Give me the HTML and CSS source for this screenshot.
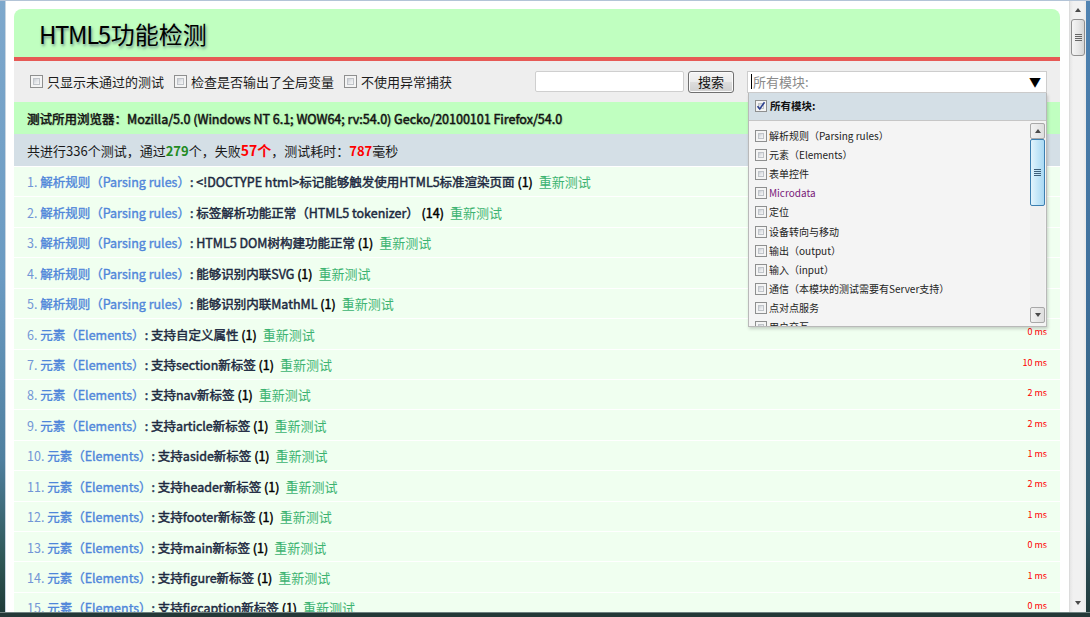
FILE: index.html
```html
<!DOCTYPE html>
<html lang="zh-CN">
<head>
<meta charset="utf-8">
<title>HTML5功能检测</title>
<link rel="stylesheet" href="styles.css">
</head>
<body>
<div class="window">
  <div class="topline"></div>
  <div class="middle">
    <div class="frame-l"></div>
    <div class="viewport">
      <div class="card">
        <header class="head"><h1><span class="h-latin">HTML5</span>功能检测</h1></header>
        <div class="toolbar">
          <label class="opt"><span class="cb"></span>只显示未通过的测试</label>
          <label class="opt"><span class="cb"></span>检查是否输出了全局变量</label>
          <label class="opt"><span class="cb"></span>不使用异常捕获</label>
          <div class="right">
            <div class="search"></div>
            <div class="btn">搜索</div>
            <div class="select">
              <span class="caret"></span><span class="ph">所有模块:</span><span class="arrow">▼</span>
              <div class="dropdown">
                <div class="dd-head"><span class="cb cb-sm checked"><svg width="10" height="10" viewBox="0 0 10 10"><path d="M1.5 5.2 L3.8 8 L8.5 1.2" fill="none" stroke="#2b3f8f" stroke-width="1.6"/></svg></span>所有模块:</div>
                <div class="dd-body">
                  <div class="dd-list">
                    <div class="dd-item"><span class="cb cb-sm"></span>解析规则（Parsing rules）</div>
                    <div class="dd-item"><span class="cb cb-sm"></span>元素（Elements）</div>
                    <div class="dd-item"><span class="cb cb-sm"></span>表单控件</div>
                    <div class="dd-item visited"><span class="cb cb-sm"></span>Microdata</div>
                    <div class="dd-item"><span class="cb cb-sm"></span>定位</div>
                    <div class="dd-item"><span class="cb cb-sm"></span>设备转向与移动</div>
                    <div class="dd-item"><span class="cb cb-sm"></span>输出（output）</div>
                    <div class="dd-item"><span class="cb cb-sm"></span>输入（input）</div>
                    <div class="dd-item"><span class="cb cb-sm"></span>通信（本模块的测试需要有Server支持）</div>
                    <div class="dd-item"><span class="cb cb-sm"></span>点对点服务</div>
                    <div class="dd-item"><span class="cb cb-sm"></span>用户交互</div>
                  </div>
                  <div class="dd-scroll">
                    <div class="dd-btn"><span class="tri-up"></span></div>
                    <div class="dd-thumb"><span class="grip"></span></div>
                    <div class="dd-track"></div>
                    <div class="dd-btn"><span class="tri-down"></span></div>
                  </div>
                </div>
              </div>
            </div>
          </div>
        </div>
        <div class="browser">测试所用浏览器：Mozilla/5.0 (Windows NT 6.1; WOW64; rv:54.0) Gecko/20100101 Firefox/54.0</div>
        <div class="summary">共进行336个测试，通过<b class="pass">279</b>个，失败<b class="fail big">57个</b>，测试耗时：<b class="fail">787</b>毫秒</div>
        <ul class="rows">
          <li><span class="main"><span class="num">1.</span> <span class="mod">解析规则（Parsing rules）</span><span class="sep">: </span><span class="title">&lt;!DOCTYPE html&gt;标记能够触发使用HTML5标准渲染页面</span> <span class="cnt">(1)</span><span class="retest">重新测试</span></span><span class="ms">1 ms</span></li>
          <li><span class="main"><span class="num">2.</span> <span class="mod">解析规则（Parsing rules）</span><span class="sep">: </span><span class="title">标签解析功能正常（HTML5 tokenizer）</span> <span class="cnt">(14)</span><span class="retest">重新测试</span></span><span class="ms">3 ms</span></li>
          <li><span class="main"><span class="num">3.</span> <span class="mod">解析规则（Parsing rules）</span><span class="sep">: </span><span class="title">HTML5 DOM树构建功能正常</span> <span class="cnt">(1)</span><span class="retest">重新测试</span></span><span class="ms">1 ms</span></li>
          <li><span class="main"><span class="num">4.</span> <span class="mod">解析规则（Parsing rules）</span><span class="sep">: </span><span class="title">能够识别内联SVG</span> <span class="cnt">(1)</span><span class="retest">重新测试</span></span><span class="ms">0 ms</span></li>
          <li><span class="main"><span class="num">5.</span> <span class="mod">解析规则（Parsing rules）</span><span class="sep">: </span><span class="title">能够识别内联MathML</span> <span class="cnt">(1)</span><span class="retest">重新测试</span></span><span class="ms">0 ms</span></li>
          <li><span class="main"><span class="num">6.</span> <span class="mod">元素（Elements）</span><span class="sep">: </span><span class="title">支持自定义属性</span> <span class="cnt">(1)</span><span class="retest">重新测试</span></span><span class="ms">0 ms</span></li>
          <li><span class="main"><span class="num">7.</span> <span class="mod">元素（Elements）</span><span class="sep">: </span><span class="title">支持section新标签</span> <span class="cnt">(1)</span><span class="retest">重新测试</span></span><span class="ms">10 ms</span></li>
          <li><span class="main"><span class="num">8.</span> <span class="mod">元素（Elements）</span><span class="sep">: </span><span class="title">支持nav新标签</span> <span class="cnt">(1)</span><span class="retest">重新测试</span></span><span class="ms">2 ms</span></li>
          <li><span class="main"><span class="num">9.</span> <span class="mod">元素（Elements）</span><span class="sep">: </span><span class="title">支持article新标签</span> <span class="cnt">(1)</span><span class="retest">重新测试</span></span><span class="ms">2 ms</span></li>
          <li><span class="main"><span class="num">10.</span> <span class="mod">元素（Elements）</span><span class="sep">: </span><span class="title">支持aside新标签</span> <span class="cnt">(1)</span><span class="retest">重新测试</span></span><span class="ms">1 ms</span></li>
          <li><span class="main"><span class="num">11.</span> <span class="mod">元素（Elements）</span><span class="sep">: </span><span class="title">支持header新标签</span> <span class="cnt">(1)</span><span class="retest">重新测试</span></span><span class="ms">2 ms</span></li>
          <li><span class="main"><span class="num">12.</span> <span class="mod">元素（Elements）</span><span class="sep">: </span><span class="title">支持footer新标签</span> <span class="cnt">(1)</span><span class="retest">重新测试</span></span><span class="ms">1 ms</span></li>
          <li><span class="main"><span class="num">13.</span> <span class="mod">元素（Elements）</span><span class="sep">: </span><span class="title">支持main新标签</span> <span class="cnt">(1)</span><span class="retest">重新测试</span></span><span class="ms">0 ms</span></li>
          <li><span class="main"><span class="num">14.</span> <span class="mod">元素（Elements）</span><span class="sep">: </span><span class="title">支持figure新标签</span> <span class="cnt">(1)</span><span class="retest">重新测试</span></span><span class="ms">1 ms</span></li>
          <li><span class="main"><span class="num">15.</span> <span class="mod">元素（Elements）</span><span class="sep">: </span><span class="title">支持figcaption新标签</span> <span class="cnt">(1)</span><span class="retest">重新测试</span></span><span class="ms">0 ms</span></li>
        </ul>
      </div>
    </div>
    <div class="vscroll">
      <div class="vs-btn"><span class="tri-up"></span></div>
      <div class="vs-thumb"><span class="grip"></span></div>
      <div class="vs-track"></div>
      <div class="vs-btn"><span class="tri-down"></span></div>
    </div>
    <div class="frame-r"></div>
  </div>
  <div class="frame-b"></div>
</div>
</body>
</html>
```

FILE: styles.css
```css
* { box-sizing: border-box; }
html, body {
  margin: 0;
  padding: 0;
  width: 1090px;
  height: 617px;
  overflow: hidden;
  background: #fff;
  font-family: "Noto Sans CJK SC", sans-serif;
}
.window {
  width: 1090px;
  height: 617px;
  display: flex;
  flex-direction: column;
}
.topline { height: 1px; flex: none; background: #b3c4d7; }
.middle { flex: 1; display: flex; min-height: 0; }
.frame-l {
  width: 6px;
  flex: none;
  background: linear-gradient(to bottom, #7ea8cc 0%, #6a9ac2 45%, #4f7f9f 75%, #2d5553 92%, #1f3b39 100%);
  border-right: 1px solid #c8d5e1;
}
.frame-r {
  width: 4px;
  flex: none;
  background: linear-gradient(to bottom, #4f83b2 0%, #3e6f9a 50%, #2f5a6a 85%, #223a3a 100%);
}
.frame-b {
  height: 5px;
  flex: none;
  background: #243837;
  border-top: 1px solid #6f8180;
}
.viewport {
  flex: 1;
  min-width: 0;
  overflow: hidden;
  background: #fff;
  padding: 8px 9px 0 8px;
}
.card { width: 100%; }

/* header */
.head {
  box-sizing: content-box;
  height: 44px;
  background: #c0ffc0;
  border-radius: 8px 8px 0 0;
  border-bottom: 4px solid #e65a55;
  display: flex;
  align-items: center;
  padding: 3px 0 1px 25px;
}
.head h1 {
  margin: 0;
  font-size: 24px;
  line-height: 1;
  font-weight: normal;
  color: #000;
  text-shadow: 1px 2px 3px rgba(40, 50, 90, 0.55);
}
.h-latin { letter-spacing: -1.4px; margin-right: 1px; }

/* toolbar */
.toolbar {
  height: 41px;
  background: #eeeeee;
  display: flex;
  align-items: center;
  padding: 0 13px 0 16px;
  font-size: 13px;
  color: #1c1c1c;
}
.opt {
  display: flex;
  align-items: center;
  gap: 4px;
  margin-right: 10px;
  line-height: 1;
  white-space: nowrap;
}
.cb {
  position: relative;
  flex: none;
  width: 13px;
  height: 13px;
  border: 1px solid #8e8f8f;
  background: #f4f4f4;
  display: inline-flex;
  align-items: center;
  justify-content: center;
}
.cb::before {
  content: "";
  position: absolute;
  inset: 2px;
  background: linear-gradient(135deg, #c8ccd2 0%, #e4e6e9 50%, #f7f7f7 100%);
  border: 1px solid #c0c4c9;
}
.cb-sm { width: 12px; height: 12px; }
.cb svg { position: relative; z-index: 1; }
.right {
  margin-left: auto;
  display: flex;
  align-items: center;
}
.search {
  width: 149px;
  height: 21px;
  background: #fff;
  border: 1px solid #cfcfcf;
  border-radius: 2px;
}
.btn {
  margin-left: 4px;
  width: 46px;
  height: 22px;
  border: 1px solid #707070;
  border-radius: 3px;
  background: linear-gradient(to bottom, #f4f4f4 0%, #ebebeb 48%, #dddddd 52%, #cfcfcf 100%);
  box-shadow: inset 0 0 0 1px #fbfbfb;
  display: flex;
  align-items: center;
  justify-content: center;
  font-size: 13px;
  line-height: 1;
  color: #111;
}
.select {
  position: relative;
  margin-left: 13px;
  width: 300px;
  height: 22px;
  background: #fff;
  border: 1px solid #cdcdcd;
  display: flex;
  align-items: center;
  padding: 0 3px 0 3px;
  font-size: 13px;
  line-height: 1;
  color: #8a8a8a;
}
.caret { width: 1px; height: 15px; background: #000; margin-right: 1px; }
.arrow { margin-left: auto; font-size: 12px; color: #000; margin-right: 2px; }

/* dropdown */
.dropdown {
  position: absolute;
  top: 21px;
  left: 0;
  width: 299px;
  height: 234px;
  background: #f4f4f4;
  border: 1px solid #b9b9b9;
  border-top: none;
  box-shadow: 1px 2px 3px rgba(0, 0, 0, 0.18);
  z-index: 5;
  color: #222;
}
.dd-head {
  height: 28px;
  background: #d4dfe6;
  border-bottom: 1px solid #c6c6c6;
  display: flex;
  align-items: center;
  gap: 3px;
  padding-left: 6px;
  font-size: 10.5px;
  font-weight: bold;
  color: #111;
}
.dd-body { display: flex; height: 205px; }
.dd-list { flex: 1; padding-top: 6px; overflow: hidden; }
.dd-item {
  height: 19.1px;
  display: flex;
  align-items: center;
  gap: 2px;
  padding-left: 6px;
  font-size: 10px;
  line-height: 1;
  white-space: nowrap;
}
.dd-item.visited { color: #7a1a7a; }
.dd-scroll {
  width: 15px;
  margin: 2px 1px 3px 0;
  display: flex;
  flex-direction: column;
  background: #f0f0f0;
}
.dd-btn {
  height: 16px;
  border: 1px solid #a8a8a8;
  border-radius: 2px;
  background: linear-gradient(to right, #f2f2f2, #dedede);
  display: flex;
  align-items: center;
  justify-content: center;
}
.dd-thumb {
  height: 67px;
  border: 1px solid #3c7fb1;
  border-radius: 2px;
  background: linear-gradient(to right, #e3f4fc 0%, #c4e6f8 50%, #a9d9f3 100%);
  display: flex;
  align-items: center;
  justify-content: center;
}
.dd-track { flex: 1; }
.grip {
  width: 7px;
  height: 7px;
  background: repeating-linear-gradient(to bottom, #3f5f7a 0 1px, transparent 1px 2px);
}
.tri-up, .tri-down {
  width: 0;
  height: 0;
  border-left: 3.5px solid transparent;
  border-right: 3.5px solid transparent;
}
.tri-up { border-bottom: 4px solid #4a4a4a; }
.tri-down { border-top: 4px solid #4a4a4a; }

/* info rows */
.browser {
  height: 32px;
  background: #c0ffc0;
  display: flex;
  align-items: center;
  padding-left: 13px;
  font-size: 12.5px;
  color: #111;
  -webkit-text-stroke: 0.45px #111;
  text-shadow: 1px 1px 1px rgba(0, 0, 0, 0.2);
  white-space: nowrap;
}
.summary {
  height: 32px;
  background: #d4dfe6;
  display: flex;
  align-items: center;
  padding-left: 13px;
  font-size: 13px;
  color: #1a1a1a;
  white-space: nowrap;
}
.summary b { font-weight: bold; }
.pass { color: #228b22; }
.fail { color: #ff0000; }
.big { font-size: 14px; }

/* test rows */
.rows { list-style: none; margin: 0; padding: 0; }
.rows li {
  margin-top: 1px;
  height: 29.43px;
  background: #f0fff0;
  display: flex;
  align-items: center;
  padding: 0 13px;
  font-size: 12.5px;
  line-height: 1;
  white-space: nowrap;
}
.main { padding-top: 1px; }
.num { color: #7296d6; }
.mod { color: #4f86da; -webkit-text-stroke: 0.35px #4f86da; }
.sep { color: #2a3a55; -webkit-text-stroke: 0.4px #2a3a55; }
.title { color: #1c2940; -webkit-text-stroke: 0.45px #1c2940; }
.cnt { color: #000; -webkit-text-stroke: 0.45px #000; }
.retest { color: #3cb371; margin-left: 6px; font-size: 13px; }
.ms {
  margin-left: auto;
  font-size: 9px;
  color: #ff0000;
  margin-bottom: 4px;
}

/* main scrollbar */
.vscroll {
  width: 17px;
  flex: none;
  background: linear-gradient(to right, #e6e6e6 0%, #f1f1f1 20%, #f1f1f1 80%, #e9e9e9 100%);
  border-left: 1px solid #dcdcdc;
  display: flex;
  flex-direction: column;
  align-items: center;
}
.vs-btn {
  height: 18px;
  width: 100%;
  display: flex;
  align-items: center;
  justify-content: center;
}
.vs-thumb {
  width: 14px;
  height: 37px;
  border: 1px solid #8f8f8f;
  border-radius: 3px;
  background: linear-gradient(to right, #f5f5f5 0%, #e8e8e8 50%, #d6d6d6 100%);
  display: flex;
  align-items: center;
  justify-content: center;
}
.vs-thumb .grip { background: repeating-linear-gradient(to bottom, #666 0 1px, transparent 1px 2px); }
.vs-track { flex: 1; }
```
